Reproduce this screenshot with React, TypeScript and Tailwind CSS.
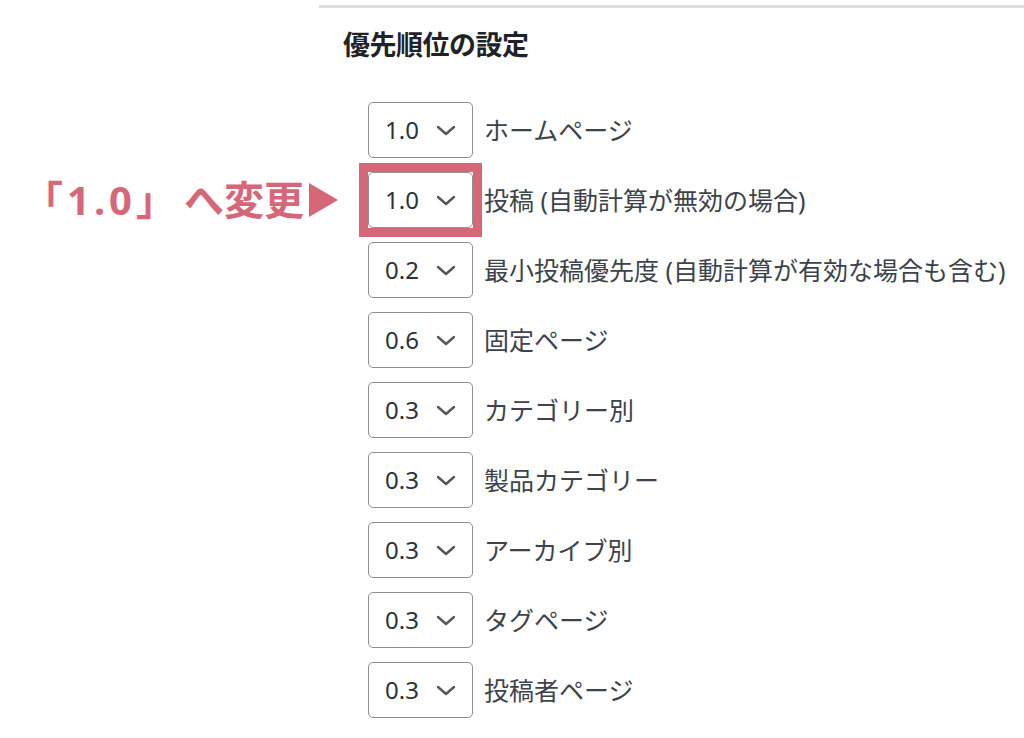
import { useState } from "react";

const rows = [
  { id: 1, value: "1.0", label: "ホームページ" },
  { id: 2, value: "1.0", label: "投稿 (自動計算が無効の場合)", highlight: true },
  { id: 3, value: "0.2", label: "最小投稿優先度 (自動計算が有効な場合も含む)" },
  { id: 4, value: "0.6", label: "固定ページ" },
  { id: 5, value: "0.3", label: "カテゴリー別" },
  { id: 6, value: "0.3", label: "製品カテゴリー" },
  { id: 7, value: "0.3", label: "アーカイブ別" },
  { id: 8, value: "0.3", label: "タグページ" },
  { id: 9, value: "0.3", label: "投稿者ページ" },
];

const jp = {
  fontFamily:
    '"Noto Sans", "Noto Sans CJK JP", "Liberation Sans", sans-serif',
};

function Chevron() {
  return (
    <svg width="20" height="11" viewBox="0 0 20 11" fill="none" className="shrink-0">
      <path
        d="M2 2l8 7 8-7"
        stroke="#50575e"
        strokeWidth="2.4"
        strokeLinecap="round"
        strokeLinejoin="round"
      />
    </svg>
  );
}

function PrioritySelect({ value }: { value: string }) {
  return (
    <div className="flex h-[56px] w-[105px] shrink-0 items-center justify-between rounded-[5px] border-[1.5px] border-[#8c8f94] bg-white pl-[16px] pr-[16px]">
      <span className="text-[24px] leading-none text-[#2c3338]">{value}</span>
      <Chevron />
    </div>
  );
}

export default function App() {
  const [selected] = useState(rows);

  return (
    <div className="min-h-[738px] w-[1024px] bg-white" style={jp}>
      <div className="ml-[319px] pt-[5px]">
        <div className="h-[3px] w-full bg-[#dcdcde]" />
        <h2 className="ml-[24px] mt-[20px] text-[27px] font-bold leading-[34px] tracking-[-0.5px] text-[#1d2327]">
          優先順位の設定
        </h2>

        <div className="ml-[49px] mt-[40px] flex flex-col gap-[14px]">
          {selected.map((row) => (
            <div key={row.id} className="relative flex items-center gap-[11px]">
              {row.highlight && (
                <div className="absolute right-full top-1/2 mr-[29px] flex -translate-y-1/2 items-center whitespace-nowrap text-[#d66779]">
                  <span className="text-[40px] font-bold leading-none tracking-[4px]">「1.0」</span>
                  <span className="ml-[4px] text-[40px] font-bold leading-none">へ変更</span>
                  <svg width="31" height="36" viewBox="0 0 31 36" className="ml-[4px]">
                    <path d="M1 1L30 18L1 35Z" fill="#d66779" />
                  </svg>
                </div>
              )}
              {row.highlight ? (
                <div className="-m-[9px] border-[9px] border-[#d66779] bg-white">
                  <PrioritySelect value={row.value} />
                </div>
              ) : (
                <PrioritySelect value={row.value} />
              )}
              <span className="whitespace-nowrap text-[25px] leading-none text-[#3c434a]">
                {row.label}
              </span>
            </div>
          ))}
        </div>
      </div>
    </div>
  );
}
